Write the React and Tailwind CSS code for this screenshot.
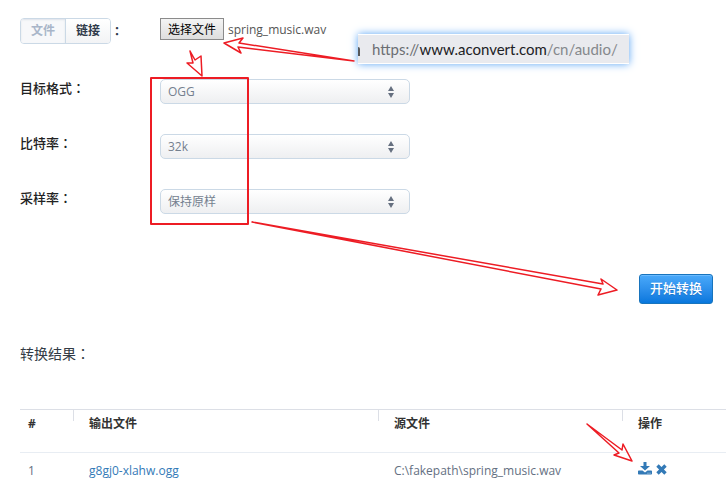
import React, { useRef, useState } from "react";

const fields = [
  { id: "format", label: "目标格式", options: ["OGG", "MP3", "WAV"] },
  { id: "bitrate", label: "比特率", options: ["32k", "64k", "128k"] },
  { id: "sample", label: "采样率", options: ["保持原样", "44100 Hz", "48000 Hz"] },
];

const results = [
  { id: 1, output: "g8gj0-xlahw.ogg", source: "C:\\fakepath\\spring_music.wav" },
];

// the TC face centres the full-width colon in its box
const Colon = () => <span className="font-['Noto_Sans_CJK_TC',sans-serif]">：</span>;

const SelectRow = ({ id, label, options }) => (
  <div className="flex h-[25px] items-center">
    <label
      htmlFor={id}
      className="w-[140px] shrink-0 pb-2 text-[13px] leading-5 font-medium text-[#222]"
    >
      {label}
      <Colon />
    </label>
    <div className="relative w-[250px]">
      <select
        id={id}
        className="block h-[25px] w-full appearance-none rounded-[5px] border border-[#cbd9e6] bg-linear-to-b from-white to-[#eeeff1] pl-[7px] text-[12px] text-[#74808f]"
      >
        {options.map((o) => (
          <option key={o}>{o}</option>
        ))}
      </select>
      {/* up / down carets */}
      <svg
        className="pointer-events-none absolute top-[7px] right-4 h-3 w-[6px]"
        viewBox="0 0 6 12"
        fill="#667080"
      >
        <path d="M3 0L6 5H0zM0 7h6L3 12z" />
      </svg>
    </div>
  </div>
);

const Results = () => (
  <table className="w-full table-fixed border-collapse text-left text-[12px]">
    <thead>
      <tr className="h-[43px] border-t border-b border-t-[#dcdfe6] border-b-[#e8edf3] align-top text-[#333]">
        <th className="w-[53px] pt-[5px] pl-2 font-bold">#</th>
        <th className="w-[305px] font-bold">
          <div className="h-[11px] border-l border-[#dcdfe6] pt-[5px] pl-[15px]">输出文件</div>
        </th>
        <th className="w-[244px] font-bold">
          <div className="h-[11px] border-l border-[#dcdfe6] pt-[5px] pl-[15px]">源文件</div>
        </th>
        <th className="font-bold">
          <div className="h-[11px] border-l border-[#dcdfe6] pt-[5px] pl-[15px]">操作</div>
        </th>
      </tr>
    </thead>
    <tbody>
      {results.map((r) => (
        <tr key={r.id} className="h-9 text-[#647082]">
          <td className="pl-2">{r.id}</td>
          <td className="pl-4">
            <a href="#output" className="text-[#337ab7]">
              {r.output}
            </a>
          </td>
          <td className="pl-4">{r.source}</td>
          <td className="pb-1 pl-4">
            <div className="flex items-center gap-1 text-[#337ab7]">
              <button aria-label="下载">
                <svg className="block h-[13px] w-[14px]" viewBox="0 0 14 13" fill="currentColor">
                  <path d="M5.5 0h3v4H12L7 8.6 2 4h3.500z" />
                  <path
                    fillRule="evenodd"
                    d="M.8 8.500h3.700L7 10.600l2.500-2.100h3.700q.8 0 .8.800v2.400q0 .8-.8.800H.8q-.8 0-.8-.8V9.300q0-.8.800-.8zM9.500 10.700v.9h1v-.9zm2 0v.9h1v-.9z"
                  />
                </svg>
              </button>
              <button aria-label="删除">
                <svg className="mt-[2px] block h-[11px] w-[11px]" viewBox="0 0 11 11" fill="currentColor">
                  <path d="M2.700.3L5.500 3.100 8.300.3l2.400 2.400L7.900 5.500l2.800 2.800-2.400 2.400-2.800-2.800-2.800 2.800L.3 8.300l2.800-2.800L.3 2.700z" />
                </svg>
              </button>
            </div>
          </td>
        </tr>
      ))}
    </tbody>
  </table>
);

// red guide marks drawn over the form
const Marks = () => (
  <svg
    className="pointer-events-none absolute top-0 left-0 h-[493px] w-[726px]"
    viewBox="0 0 726 493"
    fill="none"
    stroke="#ed1c24"
    strokeWidth="1.5"
    strokeLinejoin="round"
  >
    <rect x="151" y="78" width="97" height="146" strokeWidth="2" />
    <path d="M190 51L195 60L201 56L202 76L187 63L193 63Z" />
    <path d="M354 61L239 43L243 38L224 43L241 53L238 47Z" />
    <path d="M252 222L603 284L601 279L617 290L598 295L601 289Z" />
    <path d="M587 424L622 450L623 444L632 461L614 455L619 453Z" />
  </svg>
);

const App = () => {
  const [fileName, setFileName] = useState("spring_music.wav");
  const fileInput = useRef(null);

  return (
    <div className="relative bg-white pt-[18px] pl-5 font-['Open_Sans','Noto_Sans_CJK_SC',sans-serif]">
      <div className="flex h-[26px]">
        <div className="flex w-[140px] items-center text-[12px] font-bold text-[#2f3a4a]">
          <div className="flex h-[26px] overflow-hidden rounded-[4px] border border-[#cbd9e6]">
            <button className="w-[45px] border-r border-[#cbd9e6] bg-[#f7f8fa] text-[#a9b6c9] shadow-[inset_0_1px_2px_#dde2e9]">
              文件
            </button>
            <button className="w-11 bg-linear-to-b from-white to-[#f2f3f5]">链接</button>
          </div>
          <Colon />
        </div>
        <div className="flex h-[22px] items-center gap-1 text-[12px]">
          <button
            className="h-[22px] w-16 border border-[#8b8b8b] bg-linear-to-b from-[#f4f4f4] to-[#dedede] pt-[2px] text-black"
            onClick={() => fileInput.current.click()}
          >
            选择文件
          </button>
          <input
            ref={fileInput}
            type="file"
            className="hidden"
            aria-label="选择文件"
            onChange={(e) => setFileName(e.target.files[0]?.name ?? "")}
          />
          <span className="pt-[2px] text-[#555]">{fileName}</span>
        </div>
      </div>

      <div className="mt-[35px] flex flex-col gap-[30px]">
        {fields.map((f) => (
          <SelectRow key={f.id} {...f} />
        ))}
      </div>

      <div className="mt-[60px] flex justify-end pr-[13px]">
        <button className="h-[30px] w-[74px] rounded-[3px] border border-[#1874bd] bg-linear-to-b from-[#49a9fa] to-[#0677dd] text-[13px] font-medium text-white shadow-[inset_0_1px_0_#6abaff] text-shadow-2xs">
          开始转换
        </button>
      </div>

      <h2 className="mt-[39px] mb-[45px] text-[14px] leading-5 text-[#333b45]">
        转换结果
        <Colon />
      </h2>
      <Results />

      {/* address callout */}
      <div className="absolute top-[34px] left-[358px] flex h-[30px] w-[271px] items-center border-y border-white bg-[#e9eaee] text-[15px] whitespace-nowrap text-[#85888c] shadow-[0_0_8px_#5aa5f5]">
        <span className="mt-1 mr-3 h-[9px] w-[2px] shrink-0 rounded-tr-[2px] bg-[#55585c]" />
        <span className="font-['Lato',sans-serif]">
          <span className="text-[#6b6e73]">https://</span>
          <span className="text-[#202124]">www.aconvert.com</span>/cn/audio/
        </span>
      </div>
      <Marks />
    </div>
  );
};

export default App;
